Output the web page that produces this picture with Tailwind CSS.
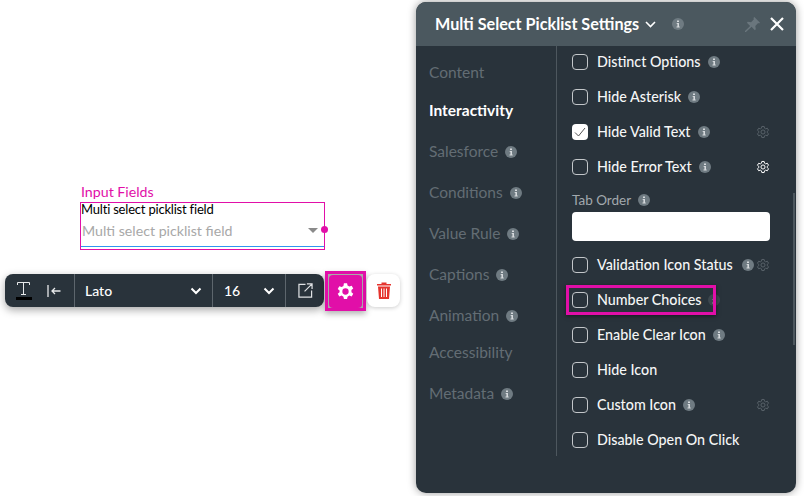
<!DOCTYPE html>
<html lang="en">
<head>
  <meta charset="UTF-8">
  <title>Multi Select Picklist Settings</title>
  <script src="https://cdn.jsdelivr.net/npm/@tailwindcss/browser@4"></script>
</head>
<body class="relative w-[804px] h-[496px] overflow-hidden bg-white font-['Lato',sans-serif]">
  <svg class="hidden">
    <symbol id="gear" viewBox="0 0 24 24"><path fill="none" stroke="currentColor" stroke-width="1.700" stroke-linejoin="round" d="M10 2.500h4l.6 3 2 1.100 2.900-1 2 3.400-2.300 2v2l2.300 2-2 3.400-2.900-1-2 1.100-.6 3h-4l-.6-3-2-1.100-2.900 1-2-3.400 2.300-2v-2l-2.300-2 2-3.400 2.900 1 2-1.100z"/><circle cx="12" cy="12" r="3.500" fill="none" stroke="currentColor" stroke-width="1.700"/></symbol>
    <symbol id="info" viewBox="0 0 12 12"><circle cx="6" cy="6" r="6" fill="currentColor"/><path fill="#d5d9dc" d="M5 2.400h2v1.500H5zM4.700 5h2.300v3.400h.7v1H4.500v-1h.9V6h-.7z"/></symbol>
  </svg>

  <!-- widget on the canvas -->
  <div class="absolute left-[81px] top-[183px] text-[14.200px] leading-[17px] text-[#e10fa8]">Input Fields</div>
  <div class="absolute left-[80px] top-[202px] w-[245px] h-[48px] border border-[#e10fa8]">
    <div class="text-[13px] tracking-[-0.2px] leading-[12px] text-black">Multi select picklist field</div>
    <div class="flex items-center h-[32px] pl-px pr-[6px] border-b border-[#2f95f0] text-[#a8a8a8] text-[14.200px]">
      <span class="flex-1">Multi select picklist field</span>
      <span class="w-0 h-0 border-x-[5px] border-x-transparent border-t-[5px] border-t-[#8a8a8a]"></span>
    </div>
    <span class="absolute right-[-4px] top-[23px] w-[7px] h-[7px] rounded-full bg-[#e10fa8]"></span>
  </div>

  <!-- text toolbar -->
  <div class="absolute left-[5px] top-[271px] flex items-start gap-[1px]">
    <div class="flex items-center w-[319px] h-[33px] mt-[3px] rounded-lg bg-[#29333b] text-white shadow-[0_3px_8px_rgba(0,0,0,0.35)]">
      <div class="flex items-center w-[70px] h-full border-r border-[#5d666d]">
        <div class="ml-[10px] w-[17px] flex flex-col items-center">
          <svg class="w-[15px] h-[15px] text-[#e8eaeb]" viewBox="0 0 15 15"><path fill="none" stroke="currentColor" stroke-width="1" d="M1.500 4V1.500h12V4M7.500 1.500v12M5 13.500h5"/></svg>
          <span class="block w-[16px] h-[3px] mt-[1px] bg-black"></span>
        </div>
        <svg class="ml-[15px] w-[14px] h-[12px] text-[#e8eaeb]" viewBox="0 0 14 12"><path fill="none" stroke="currentColor" stroke-width="1.300" d="M1 0v12M13.500 6H5M8 3L5 6l3 3"/></svg>
      </div>
      <div class="flex items-center w-[138px] h-full pl-[10px] pr-[10px] border-r border-[#5d666d] text-[14px]">
        <span class="flex-1 font-medium">Lato</span>
        <svg class="w-[12px] h-[8px]" viewBox="0 0 12 8"><path fill="none" stroke="currentColor" stroke-width="2" d="M1.500 1.500L6 6l4.500-4.500"/></svg>
      </div>
      <div class="flex items-center w-[73px] h-full pl-[11px] pr-[10px] border-r border-[#5d666d] text-[14px]">
        <span class="flex-1 font-medium">16</span>
        <svg class="w-[12px] h-[8px]" viewBox="0 0 12 8"><path fill="none" stroke="currentColor" stroke-width="2" d="M1.500 1.500L6 6l4.500-4.500"/></svg>
      </div>
      <div class="flex items-center justify-center flex-1 h-full">
        <svg class="w-[15px] h-[15px] text-[#dfe2e4]" viewBox="0 0 16 16"><path fill="none" stroke="currentColor" stroke-width="1.300" d="M8 1.500H1v13.500h13.500V8M9.500 1h5.500v5.500M15 1L7 9"/></svg>
      </div>
    </div>
    <div class="flex items-center justify-center w-[41px] h-[40px] border-[3px] border-[#e10fa8] bg-[#a9a9a9] shadow-[0_3px_6px_rgba(0,0,0,0.3)]">
      <div class="flex items-center justify-center w-[33px] h-[33px] rounded bg-[#e10fa8]">
        <svg class="w-[19px] h-[19px] text-white" viewBox="0 0 24 24"><path fill="currentColor" fill-rule="evenodd" d="M10 1.500h4l.6 3 2.300 1.300 2.900-1 2 3.400-2.300 2v2.600l2.300 2-2 3.400-2.900-1-2.300 1.300-.6 3h-4l-.6-3-2.300-1.300-2.900 1-2-3.400 2.300-2V10.700l-2.300-2 2-3.400 2.900 1 2.300-1.300zM12 8a4 4 0 100 8 4 4 0 000-8z"/></svg>
      </div>
    </div>
    <div class="flex items-center justify-center w-[33px] h-[33px] mt-[3px] rounded-lg bg-white shadow-[0_1px_4px_rgba(0,0,0,0.2)]">
      <svg class="w-[14px] h-[17px] text-[#e5342e]" viewBox="0 0 14 17"><path fill="currentColor" d="M0 2h4.500V.5h5V2H14v1.500H0zM1 4.500h12L12 17H2zM4 6.500v8.500h1V6.500zM6.500 6.500v8.500h1V6.500zM9 6.500v8.500h1V6.500z" fill-rule="evenodd"/></svg>
    </div>
  </div>

  <!-- settings panel -->
  <div class="absolute left-[416px] top-[2px] flex flex-col w-[380px] h-[491px] rounded-[10px] bg-[#29333b] shadow-[0_0_8px_rgba(0,0,0,0.4)] overflow-hidden">
    <div class="flex items-center h-[44px] shrink-0 pl-[19px] pr-[12px] bg-[#4b585f] text-white">
      <span class="text-[16.200px] font-bold">Multi Select Picklist Settings</span>
      <svg class="ml-[6px] w-[11px] h-[7px]" viewBox="0 0 11 7"><path fill="none" stroke="currentColor" stroke-width="1.600" d="M1 1l4.500 4.500L10 1"/></svg>
      <svg class="ml-[16px] w-[12px] h-[12px] text-[#6f7b82]"><use href="#info"/></svg>
      <svg class="ml-auto w-[15px] h-[15px] text-[#6a767d]" viewBox="0 0 16 16"><path fill="currentColor" d="M10 0l6 6-1 1-1-.5-3 3 .5 3.500-1 1-3.500-3.500L1 16l-1 0 0-1 5.500-5.500L2 6l1-1 3.500.5 3-3L9 1z"/></svg>
      <svg class="ml-[10px] w-[14px] h-[14px] text-white" viewBox="0 0 14 14"><path fill="none" stroke="currentColor" stroke-width="2.200" d="M1 1l12 12M13 1L1 13"/></svg>
    </div>
    <div class="flex flex-1 min-h-0">
      <!-- left nav -->
      <div class="w-[141px] h-[410px] shrink-0 pt-[17px] pl-[13px] border-r border-[#4d575e] text-[15.500px] leading-[19px] text-[#636d74]">
        <div>Content</div>
        <div class="mt-[19px] font-bold text-white">Interactivity</div>
        <div class="mt-[22px] flex items-center">Salesforce<svg class="ml-[7px] w-[12px] h-[12px] text-[#6f7b82]"><use href="#info"/></svg></div>
        <div class="mt-[22px] flex items-center">Conditions<svg class="ml-[7px] w-[12px] h-[12px] text-[#6f7b82]"><use href="#info"/></svg></div>
        <div class="mt-[22px] flex items-center">Value Rule<svg class="ml-[7px] w-[12px] h-[12px] text-[#6f7b82]"><use href="#info"/></svg></div>
        <div class="mt-[22px] flex items-center">Captions<svg class="ml-[7px] w-[12px] h-[12px] text-[#6f7b82]"><use href="#info"/></svg></div>
        <div class="mt-[22px] flex items-center">Animation<svg class="ml-[7px] w-[12px] h-[12px] text-[#6f7b82]"><use href="#info"/></svg></div>
        <div class="mt-[18px]">Accessibility</div>
        <div class="mt-[22px] flex items-center">Metadata<svg class="ml-[7px] w-[12px] h-[12px] text-[#6f7b82]"><use href="#info"/></svg></div>
      </div>
      <!-- right column -->
      <div class="relative flex-1 pl-[15px] pr-[26px] text-[14.300px] font-medium text-[#f5f6f6]">
        <div class="flex items-center h-[35px] -mt-[2px]">
          <span class="w-[16px] h-[16px] rounded border border-[#c3c7ca]"></span><span class="ml-[9px]">Distinct Options</span>
          <svg class="ml-[7px] w-[12px] h-[12px] text-[#6f7b82]"><use href="#info"/></svg>
        </div>
        <div class="flex items-center h-[35px]">
          <span class="w-[16px] h-[16px] rounded border border-[#c3c7ca]"></span><span class="ml-[9px]">Hide Asterisk</span>
          <svg class="ml-[7px] w-[12px] h-[12px] text-[#6f7b82]"><use href="#info"/></svg>
        </div>
        <div class="flex items-center h-[35px]">
          <span class="flex items-center justify-center w-[16px] h-[16px] rounded bg-white">
            <svg class="w-[12px] h-[12px] text-[#555]" viewBox="0 0 12 12"><path fill="none" stroke="currentColor" stroke-width="1" d="M1 6.500l3.500 3.500L11 2"/></svg>
          </span><span class="ml-[9px]">Hide Valid Text</span>
          <svg class="ml-[7px] w-[12px] h-[12px] text-[#6f7b82]"><use href="#info"/></svg>
          <svg class="ml-auto w-[14px] h-[14px] text-[#59636a]"><use href="#gear"/></svg>
        </div>
        <div class="flex items-center h-[35px]">
          <span class="w-[16px] h-[16px] rounded border border-[#c3c7ca]"></span><span class="ml-[9px]">Hide Error Text</span>
          <svg class="ml-[7px] w-[12px] h-[12px] text-[#6f7b82]"><use href="#info"/></svg>
          <svg class="ml-auto w-[14px] h-[14px] text-white"><use href="#gear"/></svg>
        </div>
        <div class="flex items-center mt-[6px] h-[20px] text-[13.500px] font-normal text-[#a2a9ae]">
          Tab Order<svg class="ml-[7px] w-[12px] h-[12px] text-[#6f7b82]"><use href="#info"/></svg>
        </div>
        <div class="mt-[2px] h-[29px] rounded bg-white"></div>
        <div class="flex items-center h-[35px] mt-[6px]">
          <span class="w-[16px] h-[16px] rounded border border-[#c3c7ca]"></span><span class="ml-[9px]">Validation Icon Status</span>
          <svg class="ml-[9px] w-[12px] h-[12px] text-[#6f7b82]"><use href="#info"/></svg>
          <svg class="ml-auto w-[14px] h-[14px] text-[#59636a]"><use href="#gear"/></svg>
        </div>
        <div class="relative flex items-center h-[35px]">
          <span class="w-[16px] h-[16px] rounded border border-[#c3c7ca]"></span><span class="ml-[9px]">Number Choices</span>
          <svg class="ml-[7px] w-[12px] h-[12px] text-[#3d474e]"><use href="#info"/></svg>
          <span class="absolute left-[-6px] top-[3px] w-[150px] h-[30px] border-[3px] border-[#e10fa8] shadow-[0_1px_4px_rgba(0,0,0,0.5)]"></span>
        </div>
        <div class="flex items-center h-[35px]">
          <span class="w-[16px] h-[16px] rounded border border-[#c3c7ca]"></span><span class="ml-[9px]">Enable Clear Icon</span>
          <svg class="ml-[7px] w-[12px] h-[12px] text-[#6f7b82]"><use href="#info"/></svg>
        </div>
        <div class="flex items-center h-[35px]">
          <span class="w-[16px] h-[16px] rounded border border-[#c3c7ca]"></span><span class="ml-[9px]">Hide Icon</span>
        </div>
        <div class="flex items-center h-[35px]">
          <span class="w-[16px] h-[16px] rounded border border-[#c3c7ca]"></span><span class="ml-[9px]">Custom Icon</span>
          <svg class="ml-[7px] w-[12px] h-[12px] text-[#6f7b82]"><use href="#info"/></svg>
          <svg class="ml-auto w-[14px] h-[14px] text-[#59636a]"><use href="#gear"/></svg>
        </div>
        <div class="flex items-center h-[35px]">
          <span class="w-[16px] h-[16px] rounded border border-[#c3c7ca]"></span><span class="ml-[9px]">Disable Open On Click</span>
        </div>
        <span class="absolute right-[1px] top-[147px] w-[2px] h-[152px] bg-[#4d575e]"></span>
      </div>
    </div>
  </div>
</body>
</html>
